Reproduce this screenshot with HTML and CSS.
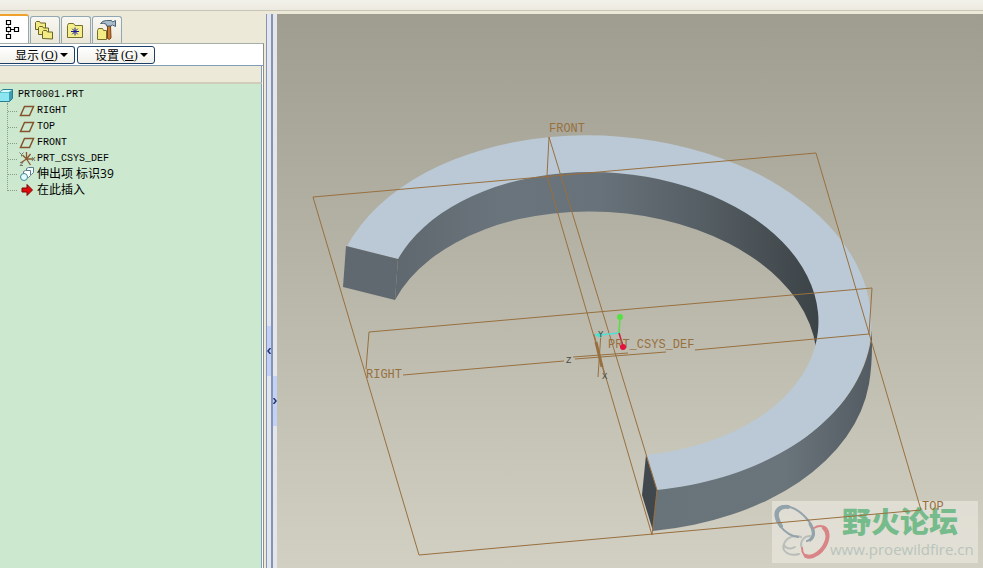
FILE: index.html
```
<!DOCTYPE html>
<html lang="zh-CN">
  <head>
    <meta charset="utf-8" />
    <meta name="viewport" content="width=device-width, initial-scale=1" />
    <title>PRT0001.PRT</title>
    <link rel="stylesheet" href="styles.css">
  </head>
  <body>
    <div class="toolbar"></div>
    <div class="workspace">
      <aside class="navigator">
        <div class="tabs">
          <button class="tab active" aria-label="模型树">
            <svg width="16" height="20" viewBox="0 0 16 20" fill="none" stroke="#000" stroke-width="1.200">
              <path d="M1.500 1.500h4v4h-4zM1.500 8.500h4v4h-4zM1.500 15.500h4v4h-4zM9.500 8.500h4v4h-4zM5.500 10.500h4"/>
              <path d="M3.500 5.500v3M3.500 12.500v3" stroke-dasharray="1 1"/>
            </svg>
          </button>
          <button class="tab" aria-label="文件夹">
            <svg width="20" height="20" viewBox="0 0 20 20" fill="#f3ec84" stroke="#6b6428">
              <path d="M1.500 9.500v-7l1-1h3l1 1.500h5v6.500z"/>
              <path d="M4.500 14.500v-7l1-1h3l1 1.500h5v6.500z"/>
              <path d="M8.500 18.500v-7l1-1h3l1 1.500h5v7z"/>
            </svg>
          </button>
          <button class="tab" aria-label="收藏夹">
            <svg width="18" height="18" viewBox="0 0 18 18">
              <path d="M1.500 16.500v-12l1-2h5l1.500 2h7.500v12z" fill="#f5ef8a" stroke="#77702c"/>
              <path d="M9 6.500v8M5 10.500h8M6.200 7.700l5.600 5.600M11.800 7.700l-5.600 5.600" stroke="#1b1b9c"/>
            </svg>
          </button>
          <button class="tab" aria-label="工具">
            <svg width="22" height="22" viewBox="0 0 22 22">
              <path d="M2.500 20.500v-9l1-2h4l1 2h3v9z" fill="#f3ec84" stroke="#77702c"/>
              <path d="M12.500 7h3l.5 12q-1.500 2.500-3.500.500z" fill="#c87834" stroke="#7c4217"/>
              <path d="M5.500 4.500q2-3 6-3h5l1 1.500 3-1.500v6l-3-1.500-1.500 1h-4.500l-.500-2q-2-1-5.500-.500z" fill="#a9bccd" stroke="#4e6374"/>
            </svg>
          </button>
        </div>
        <div class="menus">
          <button class="menu first">显示<span>(<u>O</u>)</span><i class="arrow"></i></button>
          <button class="menu">设置<span>(<u>G</u>)</span><i class="arrow"></i></button>
        </div>
        <div class="tree-panel">
          <div class="tree-header"></div>
          <div class="tree">
            <div class="root">
              <svg width="13" height="13" viewBox="0 0 13 13">
                <path d="M0 3l3-2.500h9.500v9l-3 3H0z" fill="#3d9db2" stroke="#2c7c90"/>
                <path d="M0 3.500h9v8.500H0z" fill="#8be6f1"/>
                <path d="M0 3l3-2h9L9 3z" fill="#d3fbff"/>
              </svg>
              PRT0001.PRT
            </div>
            <ul>
              <li>
                <svg width="18" height="14" viewBox="0 0 18 14"><path d="M2.500 11.500l4-9h9l-4 9z" fill="none" stroke="#84532b" stroke-width="1.500"/></svg>
                RIGHT
              </li>
              <li>
                <svg width="18" height="14" viewBox="0 0 18 14"><path d="M2.500 11.500l4-9h9l-4 9z" fill="none" stroke="#84532b" stroke-width="1.500"/></svg>
                TOP
              </li>
              <li>
                <svg width="18" height="14" viewBox="0 0 18 14"><path d="M2.500 11.500l4-9h9l-4 9z" fill="none" stroke="#84532b" stroke-width="1.500"/></svg>
                FRONT
              </li>
              <li>
                <svg width="18" height="16" viewBox="0 0 18 16" fill="none">
                  <path d="M8.500 1v7M8.500 8h7M8.500 8l-6 4M8.500 8l-4-4M8.500 8l4 6M8.500 8l4-5" stroke="#8a5a30" stroke-width="1.300"/>
                  <path d="M1.500 1.500l2 2 2-2M3.500 3.500v2M14 6l3 4M17 6l-3 4M2 11.500h3l-3 3h3" stroke="#77776a"/>
                </svg>
                PRT_CSYS_DEF
              </li>
              <li class="cjk">
                <svg width="18" height="16" viewBox="0 0 18 16">
                  <path d="M8.500 2.500l2-1h5v5l-2 2h-5z" fill="#eef8fb" stroke="#5b7c8c"/>
                  <path d="M5.500 5.500l2-1h5v5l-2 2h-5z" fill="#fff" stroke="#5b7c8c"/>
                  <circle cx="6" cy="11" r="3.500" fill="#e3fbff" stroke="#438899"/>
                </svg>
                伸出项 标识39
              </li>
              <li class="cjk">
                <svg width="18" height="14" viewBox="0 0 18 14"><path d="M4 5h5V1.500L14.500 7 9 12.500V9H4z" fill="#e00c0c" stroke="#7d0909"/></svg>
                在此插入
              </li>
            </ul>
          </div>
        </div>
      </aside>

      <div class="splitter">
        <div class="rail"><button class="grip left" aria-label="收起导航"><svg width="4" height="6" viewBox="0 0 4 6"><path d="M3.500 0L1 3l2.500 3" fill="none" stroke="#1d3375" stroke-width="1.500"/></svg></button></div>
        <div class="rail"><button class="grip right" aria-label="展开浏览器"><svg width="4" height="6" viewBox="0 0 4 6"><path d="M.5 0L3 3 .5 6" fill="none" stroke="#1d3375" stroke-width="1.500"/></svg></button></div>
      </div>

      <main class="viewport">
        <div class="watermark">
          <svg width="58" height="60" viewBox="0 0 58 60" fill="none" stroke-linecap="round">
            <path stroke="#b9bdba" stroke-width="2" d="M27 52C17 55 9 49 12 42C14 36 22 32 29 35M23 45C18 48 13 46 12 43"/>
            <path stroke="#93a3ab" stroke-width="2" d="M35 39C45 36 43 26 35 17C24 4 9 0 4 9C1 18 12 33 26 35"/>
            <path stroke="#93a3ab" stroke-width="4" d="M16 5C9 4 4 8 5 15C6 19 7 21 9 24"/>
            <path stroke="#93a3ab" stroke-width="3" d="M38 22C43 30 42 35 38 38"/>
            <path stroke="#b9bdba" stroke-width="2" d="M30 46C27 40 32 34 38 34"/>
            <path stroke="#d98486" stroke-width="2" d="M42 26C48 22 56 24 56 32C57 43 48 54 39 55C33 55 30 52 30 46"/>
            <path stroke="#d98486" stroke-width="4" d="M52 26C60 33 53 49 41 54C38 55 36 55 34 54"/>
          </svg>
          <div class="brand">
            <strong>野火论坛</strong>
            <span>www.proewildfire.cn</span>
          </div>
        </div>

        <svg class="scene" viewBox="277 14 706 554" preserveAspectRatio="xMinYMin meet">
          <defs>
            <linearGradient id="inner" gradientUnits="userSpaceOnUse" x1="395" y1="0" x2="819" y2="0">
              <stop offset="0" stop-color="#5f686e"/>
              <stop offset=".25" stop-color="#6a747c"/>
              <stop offset=".48" stop-color="#68727a"/>
              <stop offset=".75" stop-color="#535c61"/>
              <stop offset="1" stop-color="#3c4347"/>
            </linearGradient>
            <linearGradient id="outer" gradientUnits="userSpaceOnUse" x1="653" y1="0" x2="872" y2="0">
              <stop offset="0" stop-color="#69737a"/>
              <stop offset=".6" stop-color="#6a747b"/>
              <stop offset="1" stop-color="#535c62"/>
            </linearGradient>
          </defs>

          <!-- ring: outer wall, inner wall, top face, cut ends -->
          <path fill="url(#outer)" d="M657 489A270 178 3.450 0 0 872 330V345Q872 366 869 384A271 178 3.450 0 1 653 531z"/>
          <path fill="url(#inner)" d="M398 259A217 142 3.300 0 1 816 348A217 141 3.300 0 0 395 300z"/>
          <path fill="#bac9d5" d="M347 246A270 178 3.450 1 1 657 490L646 455A217 142 3.300 1 0 398 259z"/>
          <path fill="#60696f" d="M346 246L398 259 395 300 343 287z"/>
          <path fill="#40484d" d="M646 455L657 490 653 531 642 495z"/>

          <!-- datum planes -->
          <g class="datum">
            <path d="M313 197L816 153 921 510 419 555z"/>
            <path d="M403 375L564 361M695 350L869 334 872 288 369 332 366 369"/>
            <path d="M549 137L657 490 652 535 547 176z"/>
            <path d="M573 357L628 353M575 359L666 352M601 332L598 377M594 334L604 373"/>
            <path class="bold" d="M596 342L602 367"/>
          </g>

          <!-- spin centre -->
          <path d="M619 333L620 318" stroke="#55e043" stroke-width="1.500"/>
          <path d="M619 333L600 335" stroke="#4fe0d4" stroke-width="1.500"/>
          <path d="M619 333L623 346" stroke="#d3163d" stroke-width="1.500"/>
          <circle cx="620" cy="317" r="3" fill="#55e043"/>
          <path d="M594 335L601 332V338z" fill="#4fe0d4"/>

          <g class="labels">
            <text x="549" y="132">FRONT</text>
            <text x="366" y="378">RIGHT</text>
            <text x="922" y="510">TOP</text>
            <text x="608" y="348">PRT_CSYS_DEF</text>
          </g>
          <circle cx="623" cy="347" r="3" fill="#e3123c"/>
          <g class="axes">
            <text x="598" y="337">Y</text>
            <text x="602" y="379">X</text>
            <text x="566" y="363">Z</text>
          </g>
        </svg>
      </main>
    </div>
  </body>
</html>
```
FILE: styles.css
```
* {
  box-sizing: border-box;
  margin: 0;
  padding: 0;
}

body {
  display: flex;
  flex-direction: column;
  height: 100vh;
  overflow: hidden;
  background-color: #ece9d8;
  color: #000;
  font-family: "Liberation Serif", "Noto Sans CJK SC", serif;
  font-size: 12px;
}

button {
  font: inherit;
  color: inherit;
}

svg {
  display: block;
  flex: none;
}

.toolbar {
  height: 11px;
  margin-bottom: 3px;
  background: linear-gradient(#f3f2ea, #eceae0);
  border-bottom: 1px solid #c8c5b6;
}

.workspace {
  display: flex;
  flex: 1;
  min-height: 0;
}

/* navigator */
.navigator {
  display: flex;
  flex-direction: column;
  width: 264px;
  margin-right: 2px;
}

.tabs {
  display: flex;
  align-items: flex-end;
  gap: 1px;
  height: 29px;
}

.tab {
  display: flex;
  align-items: center;
  justify-content: center;
  width: 30px;
  height: 27px;
  padding-right: 2px;
  background: linear-gradient(#f8f7f1, #ebe8d9);
  border: 1px solid #91a7b4;
  border-bottom: 0;
  border-radius: 3px 3px 0 0;
}

.tab.active {
  justify-content: flex-start;
  width: 29px;
  height: 29px;
  padding: 0 0 2px 5px;
  background: #fff;
  border-top: 2px solid #f0a02c;
  border-left: 0;
  border-radius: 0 3px 0 0;
}

.menus {
  display: flex;
  gap: 2px;
  padding: 2px 0 1px;
  background: #fff;
  border-top: 1px solid #a5aea8;
  border-right: 1px solid #8c8f88;
}

.menu {
  display: flex;
  align-items: center;
  gap: 2px;
  width: 78px;
  height: 18px;
  padding-left: 17px;
  background: linear-gradient(#fff, #f1f0ea);
  border: 1px solid #1d4068;
  border-radius: 3px;
}

.menu.first {
  width: 75px;
  padding-left: 15px;
  border-left: 0;
  border-radius: 0 3px 3px 0;
}

.arrow {
  border: 4px solid transparent;
  border-top-color: #000;
  border-bottom: 0;
}

.tree-panel {
  display: flex;
  flex-direction: column;
  flex: 1;
  border-top: 1px solid #7f9db9;
  border-right: 1px solid #8c8f88;
  background: #fff;
}

.tree-header {
  height: 18px;
  margin-right: 1px;
  background: #ece9d8;
  border-right: 1px solid #7f9db9;
  border-bottom: 2px solid #cfccba;
}

.tree {
  flex: 1;
  margin-right: 1px;
  padding-top: 3px;
  background: #cce8cf;
  border-right: 1px solid #7f9db9;
  font-family: "Liberation Mono", "Noto Sans CJK SC", monospace;
  font-size: 10px;
  line-height: 16px;
}

.root {
  display: flex;
  align-items: center;
  gap: 5px;
}

.tree ul {
  position: relative;
  padding-left: 8px;
  list-style: none;
}

.tree ul::before {
  content: "";
  position: absolute;
  top: 0;
  bottom: 8px;
  left: 7px;
  border-left: 1px dotted #8b9a8c;
}

.tree li {
  display: flex;
  align-items: center;
  gap: 1px;
  height: 16px;
}

.tree li::before {
  content: "";
  width: 9px;
  border-top: 1px dotted #8b9a8c;
}

.tree .cjk {
  padding-bottom: 2px;
  font-family: "Open Sans", "Noto Sans CJK SC", sans-serif;
  font-size: 12px;
}

/* splitter between the navigator and the model */
.splitter {
  display: flex;
}

.rail {
  display: flex;
  flex-direction: column;
  width: 5px;
  background: #e3e6ec;
  border-left: 1px solid #8593b5;
}

.rail + .rail {
  width: 6px;
  border-left: 2px solid #8593b5;
}

.grip {
  display: flex;
  align-items: center;
  justify-content: center;
  height: 50px;
  background: #c4d1f7;
  border: 0;
}

.grip.left {
  margin-top: 312px;
}

.grip.right {
  margin-top: 362px;
}

/* model view */
.viewport {
  position: relative;
  flex: 1;
  min-width: 0;
  background: linear-gradient(#9f9c90, #b9b7aa 50%, #d2cfc3);
}

.scene {
  position: relative;
  width: 100%;
  height: 100%;
}

.datum {
  fill: none;
  stroke: #98703f;
  stroke-width: 1;
}

.datum .bold {
  stroke-width: 3;
}

.labels {
  fill: #98703f;
  font-family: "Liberation Mono", monospace;
  font-size: 12px;
}

.axes {
  fill: #4a4a46;
  font-family: "Liberation Mono", monospace;
  font-size: 9px;
}

.watermark {
  position: absolute;
  right: 5px;
  bottom: 5px;
  display: flex;
  align-items: center;
  width: 206px;
  height: 62px;
  background: rgba(240, 238, 230, 0.55);
}

.brand {
  display: flex;
  flex-direction: column;
  font-family: "Open Sans", "Noto Sans CJK SC", sans-serif;
}

.brand strong {
  padding-left: 12px;
  color: #76bb8b;
  font-size: 29px;
  font-weight: 900;
  line-height: 34px;
}

.brand span {
  color: #b9c4bc;
  font-size: 15px;
  line-height: 20px;
}
```
